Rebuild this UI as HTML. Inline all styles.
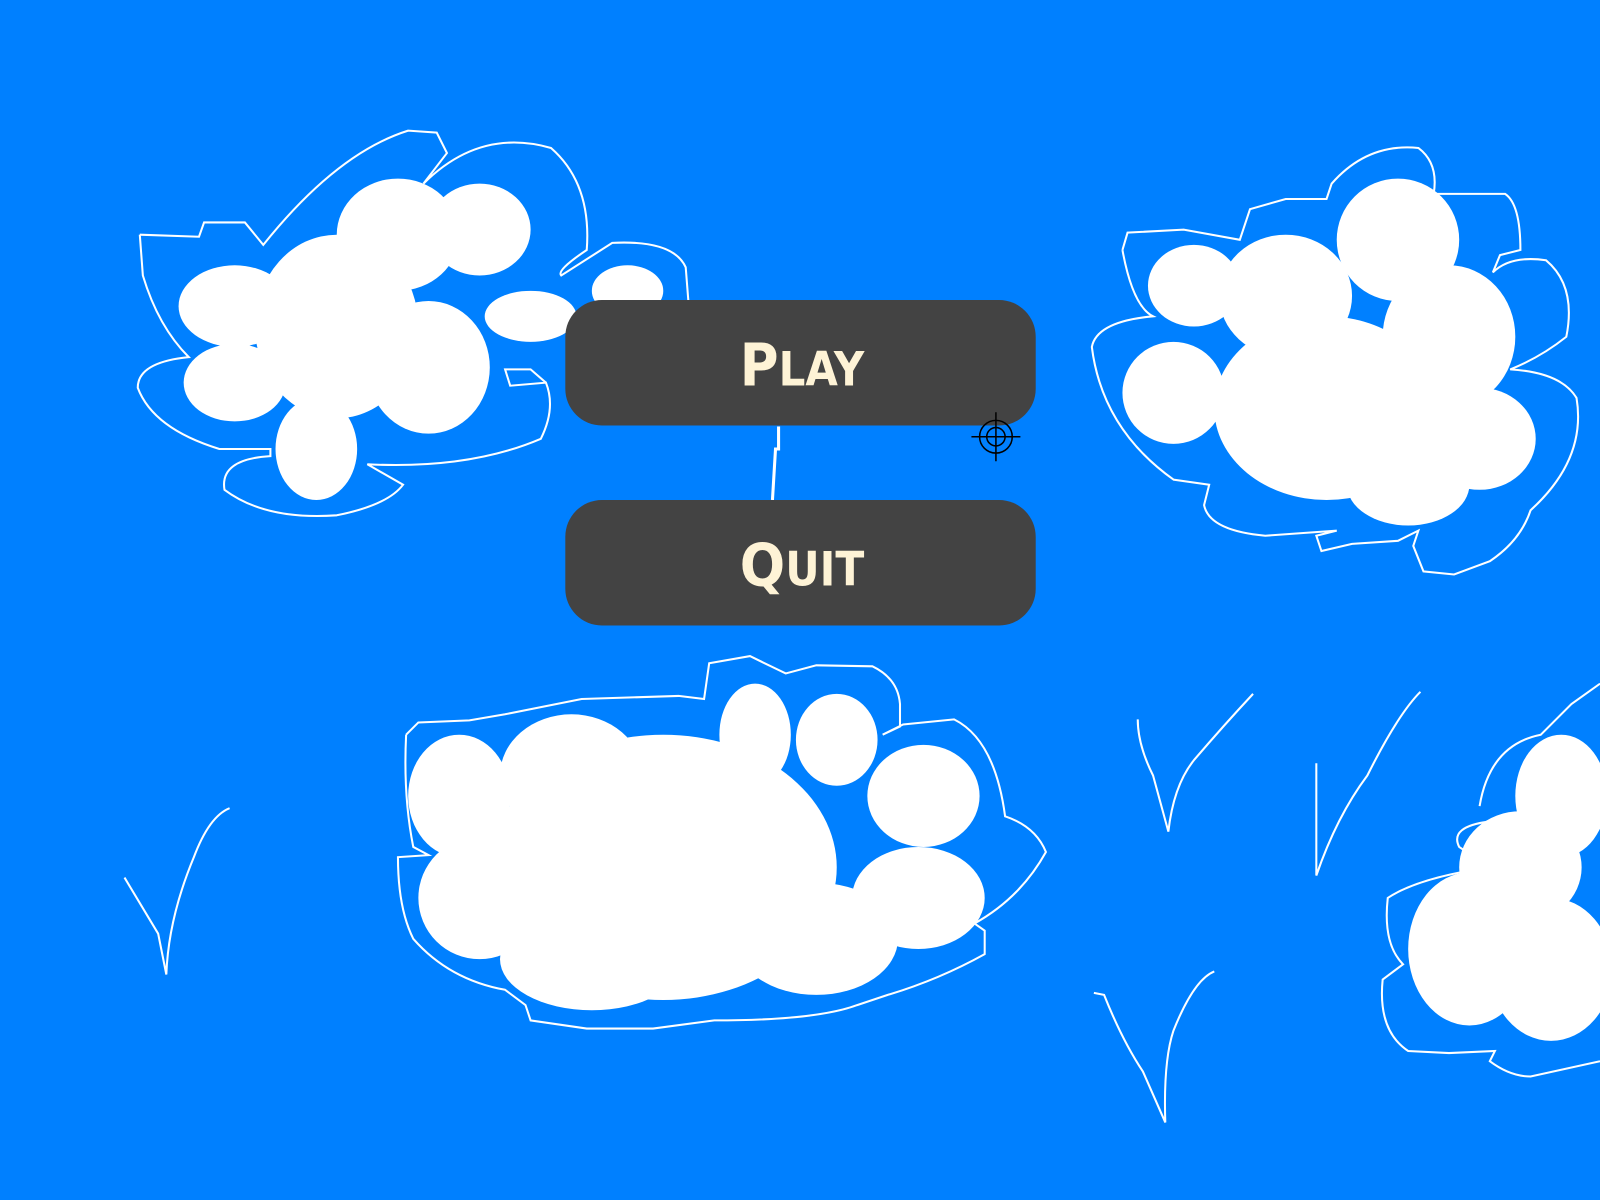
<!DOCTYPE html>
<html><head><style>
html,body{margin:0;padding:0;background:#0080ff;overflow:hidden}
svg{display:block}
</style></head><body>
<svg width="1600" height="1200" viewBox="0 0 1568 1176" preserveAspectRatio="none">
<rect width="1568" height="1176" fill="#0080ff"/>
<g fill="#fff">
<ellipse cx="230" cy="300" rx="55" ry="40"/>
<ellipse cx="230" cy="375" rx="50" ry="38"/>
<ellipse cx="330" cy="320" rx="80" ry="90"/>
<ellipse cx="390" cy="230" rx="60" ry="55"/>
<ellipse cx="470" cy="225" rx="50" ry="45"/>
<ellipse cx="420" cy="360" rx="60" ry="65"/>
<ellipse cx="310" cy="440" rx="40" ry="50"/>
<ellipse cx="520" cy="310" rx="45" ry="25"/>
<ellipse cx="615" cy="285" rx="35" ry="25"/>
<ellipse cx="1170" cy="280" rx="45" ry="40"/>
<ellipse cx="1150" cy="385" rx="50" ry="50"/>
<ellipse cx="1260" cy="290" rx="65" ry="60"/>
<ellipse cx="1370" cy="235" rx="60" ry="60"/>
<ellipse cx="1420" cy="330" rx="65" ry="70"/>
<ellipse cx="1300" cy="400" rx="110" ry="90"/>
<ellipse cx="1450" cy="430" rx="55" ry="50"/>
<ellipse cx="1380" cy="475" rx="60" ry="40"/>
<ellipse cx="450" cy="780" rx="50" ry="60"/>
<ellipse cx="470" cy="880" rx="60" ry="60"/>
<ellipse cx="560" cy="760" rx="70" ry="60"/>
<ellipse cx="650" cy="850" rx="170" ry="130"/>
<ellipse cx="740" cy="720" rx="35" ry="50"/>
<ellipse cx="820" cy="725" rx="40" ry="45"/>
<ellipse cx="905" cy="780" rx="55" ry="50"/>
<ellipse cx="900" cy="880" rx="65" ry="50"/>
<ellipse cx="800" cy="920" rx="80" ry="55"/>
<ellipse cx="580" cy="940" rx="90" ry="50"/>
<ellipse cx="1530" cy="780" rx="45" ry="60"/>
<ellipse cx="1490" cy="850" rx="60" ry="55"/>
<ellipse cx="1440" cy="930" rx="60" ry="75"/>
<ellipse cx="1520" cy="950" rx="60" ry="70"/>
</g>
<g fill="none" stroke="#fff" stroke-width="2">
<path d="M137 230 L195 232 L200 218 L240 218 L258 240 Q330 150 400 128 L428 130 L438 150 L415 180 Q470 125 540 145 Q580 180 575 245 Q545 265 550 270 L600 238 Q660 235 672 262 L675 300"/>
<path d="M137 230 L140 270 Q155 320 185 350 Q135 355 135 380 Q150 420 215 440 L265 440 L265 447 Q215 450 220 480 Q260 510 330 505 Q380 495 395 475 L360 455 Q460 460 530 430 Q545 400 535 375 L500 378 L495 362 L520 362 L535 375"/>
<path d="M1100 245 L1105 228 L1160 225 L1215 235 L1225 205 L1260 195 L1300 195 L1305 180 Q1340 140 1390 145 Q1410 160 1405 190 L1475 190 Q1490 200 1490 245 L1470 250 L1463 267 Q1480 250 1515 255 Q1545 280 1535 330 Q1510 350 1480 362 Q1530 365 1545 390 Q1555 450 1500 500 Q1490 530 1460 550 L1425 563 L1395 560 L1385 535 L1390 520 L1370 530 L1325 533 L1295 540 L1290 525 L1310 520 L1240 525 Q1185 520 1180 495 L1185 475 L1150 470 Q1080 420 1070 340 Q1075 315 1130 310 Q1110 300 1100 245"/>
<path d="M398 720 L410 708 L460 706 L495 700 L570 685 L665 682 L690 685 L695 650 L735 643 L770 660 L800 652 L855 653 Q880 665 882 690 L882 712 L865 720 L885 710 L935 705 Q975 725 985 800 Q1015 810 1025 835 Q1000 880 955 905 L965 912 L965 935 Q920 960 870 975 L840 985 Q800 1000 700 1000 L640 1008 L575 1008 L520 1000 L515 985 L495 970 Q440 960 405 920 Q390 890 390 840 L420 838 L405 830 Q395 780 398 720"/>
<path d="M1450 790 Q1460 730 1510 720 L1540 690 L1568 670"/>
<path d="M1460 805 Q1420 810 1430 830 L1460 850 Q1390 860 1360 880 Q1355 925 1375 945 L1355 960 Q1350 1010 1380 1030 L1420 1032 L1465 1030 L1460 1040 Q1480 1055 1500 1055 L1568 1040"/>
<path d="M122 860 Q140 890 155 915 L163 955 Q165 900 190 840 Q205 800 225 792"/>
<path d="M1115 705 Q1115 730 1130 760 L1145 815 Q1150 770 1170 745 Q1200 710 1228 680"/>
<path d="M1290 748 L1290 858 Q1310 800 1340 760 Q1370 700 1392 678"/>
<path d="M1072 973 L1082 975 Q1100 1020 1120 1050 L1142 1100 Q1140 1040 1150 1010 Q1170 960 1190 952"/>
<path d="M763 418 L763 440 L760 440 L757 490" stroke-width="3"/>
</g>
<rect x="554" y="294" width="461" height="123" rx="36" fill="#434343"/>
<rect x="554" y="490" width="461" height="123" rx="36" fill="#434343"/>
<g fill="#fef3d6" font-family="'DejaVu Sans','Liberation Sans',sans-serif" text-anchor="middle" font-weight="bold">
<text x="786" y="378" font-size="58" textLength="122" lengthAdjust="spacingAndGlyphs">P<tspan font-size="46">LAY</tspan></text>
<text x="786" y="574" font-size="58" textLength="122" lengthAdjust="spacingAndGlyphs">Q<tspan font-size="46">UIT</tspan></text>
</g>
<g fill="none" stroke="#000" stroke-width="1.5">
<circle cx="976" cy="428" r="16"/><circle cx="976" cy="428" r="9"/>
<path d="M952 428H1000M976 404V452"/>
</g>
</svg>
</body></html>
